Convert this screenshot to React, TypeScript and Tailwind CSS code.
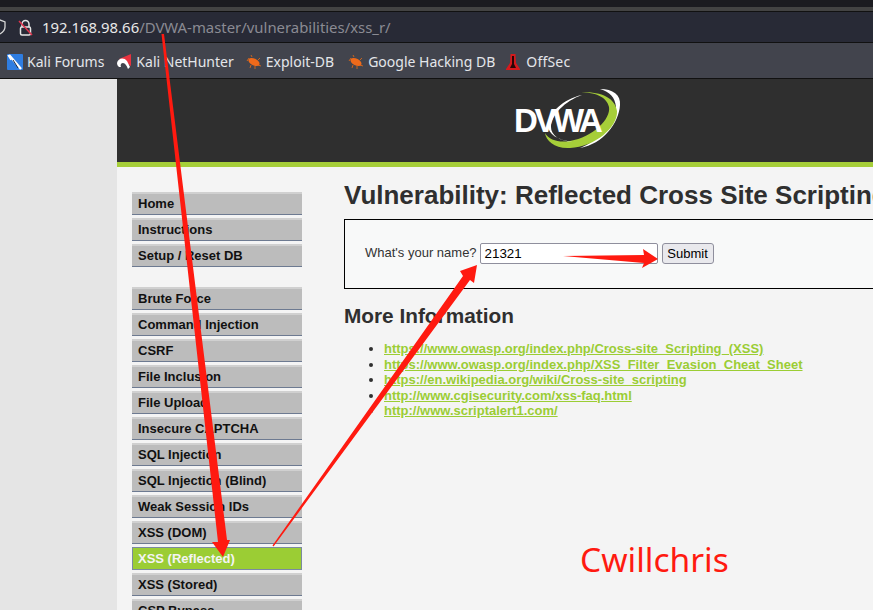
const sans = "font-['Liberation_Sans',Arial,sans-serif]";
const menu1 = ["Home", "Instructions", "Setup / Reset DB"];
const menu2 = ["Brute Force", "Command Injection", "CSRF", "File Inclusion", "File Upload", "Insecure CAPTCHA", "SQL Injection", "SQL Injection (Blind)", "Weak Session IDs", "XSS (DOM)", "XSS (Reflected)", "XSS (Stored)", "CSP Bypass"];
const links = [
  "https://www.owasp.org/index.php/Cross-site_Scripting_(XSS)",
  "https://www.owasp.org/index.php/XSS_Filter_Evasion_Cheat_Sheet",
  "https://en.wikipedia.org/wiki/Cross-site_scripting",
  "http://www.cgisecurity.com/xss-faq.html",
  "http://www.scriptalert1.com/",
];

function Item({ label }: { label: string }) {
  const active = label === "XSS (Reflected)";
  return (
    <div className={`h-[23px] shrink-0 text-[13px] font-bold ${active ? "border border-[#7b8aa0] bg-[#9bcd34] pl-[5px] leading-[21px] text-[#f4f4f4]" : "border-t-2 border-b border-t-[#d0d0d0] border-b-[#6d7a91] bg-[#bcbcbc] pl-[6px] leading-[20px] text-[#111]"}`}>
      {label}
    </div>
  );
}

function Dragon() {
  return (
    <svg width="16" height="16" viewBox="0 0 16 16" className="shrink-0">
      <path d="M3 4 1 7M6 3 5 1M5 11l-1 3M9 12l0 3M12 6l2-2M12 11l3 1" stroke="#c9641f" strokeWidth="1" />
      <ellipse cx="8" cy="8" rx="6" ry="3.4" transform="rotate(28 8 8)" fill="#ee6a1b" />
    </svg>
  );
}

export default function App() {
  return (
    <div className={`relative flex h-[610px] w-[873px] flex-col overflow-hidden bg-[#f4f4f4] ${sans}`}>
      <div className="h-[7px] shrink-0 bg-[#1b1b20]" />
      <div className="h-[4px] shrink-0 bg-[#434343]" />
      <div className="flex h-[32px] shrink-0 items-center border-y border-y-[#111] bg-[#282a36] font-['Noto_Sans',sans-serif] text-[14.9px]">
        <svg width="6" height="16" viewBox="0 0 6 16" className="shrink-0">
          <path d="M-6 3 0 1l5 2v5c0 3-2 5-5 7" fill="none" stroke="#d8d8d8" strokeWidth="1.3" />
        </svg>
        <svg width="15" height="17" viewBox="0 0 15 17" className="ml-[12px] shrink-0">
          <path d="M4 8V5a3.5 3.5 0 0 1 7 0v3" fill="none" stroke="#e6e6e6" strokeWidth="1.5" />
          <rect x="2.5" y="8" width="10" height="8" rx="1.5" fill="none" stroke="#e6e6e6" strokeWidth="1.5" />
          <path d="M1 2l13 14" stroke="#e0334c" strokeWidth="1.5" />
        </svg>
        <span className="ml-[9px] text-[#e8e8e8]">192.168.98.66</span>
        <span className="text-[#8b8b93]">/DVWA-master/vulnerabilities/xss_r/</span>
      </div>
      <div className="flex h-[36px] shrink-0 items-center border-b border-b-[#111] bg-[#42444d] pt-[2px] pl-[7px] font-['Noto_Sans',sans-serif] text-[14px] text-[#e4e6ea]">
        <svg width="16" height="16" viewBox="0 0 16 16" className="shrink-0">
          <rect width="16" height="16" rx="1" fill="#2f7de1" />
          <path d="M2 1l12 14" stroke="#fff" strokeWidth="2.4" />
          <path d="M6 6l5 8" stroke="#1c2a44" strokeWidth="1" />
          <path d="M1 1l3 5" stroke="#fff" strokeWidth="1.4" />
        </svg>
        <span className="ml-[4px]">Kali Forums</span>
        <svg width="16" height="16" viewBox="0 0 16 16" className="ml-[12px] shrink-0">
          <path d="M3 5l12-5v12z" fill="#e8323f" />
          <path d="M1 9c1-5 7-6 10-2l3 6-2 2c-1-3-3-6-5-6-2 0-3 2-2 4H3C2 12 1 11 1 9z" fill="#fff" />
        </svg>
        <span className="ml-[4px]">Kali NetHunter</span>
        <div className="ml-[12px]"><Dragon /></div>
        <span className="ml-[4px]">Exploit-DB</span>
        <div className="ml-[14px]"><Dragon /></div>
        <span className="ml-[4px]">Google Hacking DB</span>
        <svg width="14" height="18" viewBox="0 0 14 18" className="ml-[11px] shrink-0">
          <path d="M4.5 1h5L10 10l4 6v1H0v-1l4-6z" fill="#d5191c" />
          <path d="M6 3h2v8l2 4H4l2-4z" fill="#2a0606" />
        </svg>
        <span className="ml-[6px] tracking-[0.2px]">OffSec</span>
      </div>

      <div className="flex min-h-0 flex-1">
        <div className="w-[117px] shrink-0 bg-[#e5e5e5]" />
        <div className="flex min-w-0 flex-1 flex-col">
          <div className="flex h-[83px] shrink-0 bg-[#2f2f2f] pl-[398px]">
            <div className="relative mt-[10px] h-[62px] w-[106px]">
              <svg width="106" height="62" viewBox="0 0 106 62" className="absolute top-0 left-0">
                <path d="M85 0C98 0 106 6 105 16 104 34 88 55 65 59 84 52 102 32 101 18 100 8 95 3 85 0z" fill="#fff" />
                <path d="M63 3C85 2 100 8 102 22 103 38 80 58 55 59 40 60 31 52 30 44 34 51 44 54 55 52 78 48 96 30 94 18 92 8 80 3 63 3z" fill="#a6ce39" />
                <path d="M67 6C48 10 34 24 33 36 33 45 42 51 58 53 44 52 36 46 36 38 36 26 50 12 67 6z" fill="#fff" />
              </svg>
              <span className="absolute top-[13px] left-[-1px] text-[33px] leading-[38px] font-bold tracking-[-3.4px] text-white">DVWA</span>
            </div>
          </div>
          <div className="h-[5px] shrink-0 bg-[#a6ce39]" />
          <div className="flex min-h-0 flex-1">
            <div className="ml-[15px] flex w-[170px] shrink-0 flex-col gap-[3px] pt-[25px]">
              {menu1.map((m) => <Item key={m} label={m} />)}
              <div className="h-[14px] shrink-0" />
              {menu2.map((m) => <Item key={m} label={m} />)}
            </div>
            <div className="ml-[42px] min-w-0 flex-1 pt-[13px] whitespace-nowrap">
              <h1 className="text-[26px] leading-[30px] font-bold text-[#2f2f2f]">Vulnerability: Reflected Cross Site Scripting (XSS)</h1>
              <div className="mt-[9px] flex h-[70px] w-[600px] items-start border border-black bg-[#f8f9f9] pt-[23px] pl-[20px] text-[13px] text-[#333]">
                <span className="mt-[2px] leading-[16px]">What's your name?</span>
                <div className="ml-[3px] h-[21px] w-[178px] rounded-[2px] border border-[#8f8f9d] bg-white pl-[4px] text-[13.33px] leading-[20px] text-black">21321</div>
                <div className="ml-[4px] h-[21px] w-[52px] rounded-[3px] border border-[#8f8f9d] bg-[#e9e9ed] text-center text-[13px] leading-[19px] text-black">Submit</div>
              </div>
              <h2 className="mt-[15px] text-[20.8px] leading-[24px] font-bold text-[#2f2f2f]">More Information</h2>
              <ul className="mt-[13px] ml-[40px] list-disc text-[13px] leading-[15.5px] font-bold text-[#2f2f2f]">
                {links.map((l) => (
                  <li key={l}><span className="text-[#9bcd34] underline">{l}</span></li>
                ))}
              </ul>
            </div>
          </div>
        </div>
      </div>

      <svg width="873" height="610" viewBox="0 0 873 610" className="pointer-events-none absolute top-0 left-0">
        <path d="M161.5 34 164 34 227 540 230 540 223 557 212 542 218 542z" fill="#ff1a10" />
        <path d="M272.5 545.5 463 276 460 271 477 265 474 283 470 280 273.5 546.5z" fill="#ff1a10" />
        <path d="M563 256 644 255 643 249 658 259 642 268 644 263z" fill="#ff1a10" />
      </svg>
      <span className="absolute top-[535px] left-[580px] font-['Noto_Sans',sans-serif] text-[33.5px] leading-[48px] text-[#ff1a10]">Cwillchris</span>
    </div>
  );
}
